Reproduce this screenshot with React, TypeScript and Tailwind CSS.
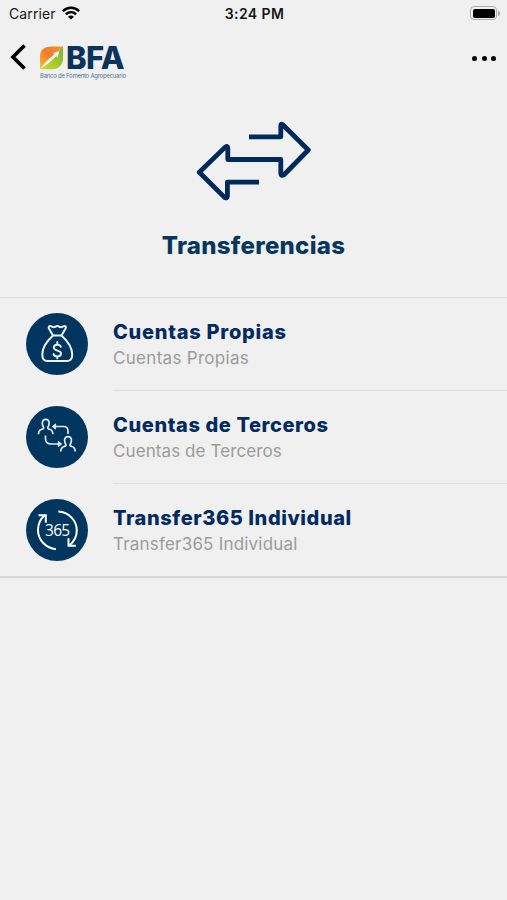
import React from 'react';

const MoneyBagIcon = () => (
  <svg viewBox="0 0 62 62" className="h-[62px] w-[62px]" fill="none" stroke="#eaf3fa" strokeWidth="2" strokeLinecap="round" strokeLinejoin="round">
    <path d="M27 22.500 22.800 15.200c-.6-1.400.5-2.400 1.800-2.100 1.500.4 2.200 1.300 3.500 1 1.200-.3 1.700-1.200 3.200-1.200s2 1 3.200 1.200c1.300.3 2-.6 3.500-1 1.300-.3 2.300.7 1.700 2.100L35.500 22.500Z" />
    <path d="M27 22.500C21 28 16.300 34 16.300 41.500c0 4.500 1.800 6.500 5.200 6.500h19.500c3.400 0 5.200-2 5.200-6.500 0-7.500-4.700-13.500-10.700-19" />
    <path d="M34.800 33.800c-.5-1.400-1.700-2.100-3.500-2.100-2.100 0-3.500 1.100-3.500 2.900 0 4.100 7.200 1.800 7.200 5.900 0 1.800-1.500 2.900-3.700 2.900-2 0-3.300-.8-3.800-2.300M31.300 29v2.500M31.300 43.400v2" strokeWidth="1.900" />
  </svg>
);

const PeopleIcon = () => (
  <svg viewBox="0 0 62 62" className="h-[62px] w-[62px]" fill="none" stroke="#dcebf5" strokeWidth="1.700" strokeLinejoin="round">
    <path d="M12.500 28.200c0-3.300 1.200-4.200 3.300-4.900 1.600-.5 2.100-1.100 1.700-2.300-.9-1-1.200-2.400-1.200-3.700 0-2.600 1.300-3.900 3.400-3.900s3.400 1.300 3.400 3.900c0 1.300-.3 2.700-1.200 3.700-.4 1.200.1 1.800 1.700 2.300 2.100.7 3.300 1.600 3.300 4.900" />
    <path d="M34.800 45.400c0-3.300 1.200-4.200 3.300-4.900 1.600-.5 2.100-1.100 1.700-2.300-.9-1-1.200-2.400-1.200-3.700 0-2.600 1.300-3.900 3.400-3.900s3.400 1.300 3.400 3.900c0 1.300-.3 2.700-1.200 3.700-.4 1.200.1 1.800 1.700 2.300 2.100.7 3.300 1.600 3.300 4.900" />
    <path d="M42 28v-3c0-3-1.500-4.500-4.500-4.500H28" />
    <path d="M19.500 29.500v3c0 3.600 2 5.500 5.500 5.500h9" />
    <path d="m26.200 20.500 3.400-2.600v5.200ZM35.700 38l-3.400-2.600v5.200Z" fill="#dcebf5" strokeWidth="1" />
  </svg>
);

const Transfer365Icon = () => (
  <svg viewBox="0 0 62 62" className="h-[62px] w-[62px]" fill="none" stroke="#ffffff" strokeWidth="2">
    <path d="M30 50.200C20 49.200 12 41 12 31c0-6 2.600-11.300 7-15" />
    <path d="M12.500 16.300h7.300v7.400" />
    <path d="M32.300 12.600C42.500 13 50.800 21.300 50.800 31.500c0 6-3 11.300-7.600 15" />
    <path d="M49.800 46.800h-7.300v-7.500" />
    <text x="31.200" y="36.600" textAnchor="middle" fill="#ffffff" stroke="none" fontFamily="Open Sans, sans-serif" fontSize="15.500" fontWeight="500" letterSpacing="-0.800">365</text>
  </svg>
);

const BackIcon = () => (
  <svg viewBox="0 0 16 26" className="h-[26px] w-4" fill="none" stroke="#000" strokeWidth="3.700">
    <path d="M14.500 1.500 3 13 14.500 24.500" />
  </svg>
);

const WifiIcon = () => (
  <svg viewBox="0 0 18 14" className="h-[14px] w-[18px]" fill="none" stroke="#000" strokeWidth="2.500">
    <path d="M.9 5.100c4.700-4.400 11.500-4.400 16.200 0" />
    <path d="M3.900 8.300c3-2.700 7.200-2.700 10.200 0" />
    <path d="M9 13.600 6 10.700c1.800-1.500 4.200-1.500 6 0Z" fill="#000" stroke="none" />
  </svg>
);

const LeafMark = () => (
  <svg viewBox="0 0 24 24" className="h-6 w-6">
    <defs>
      <linearGradient id="leafWarm" x1="0" y1="1" x2="1" y2="0">
        <stop offset="0" stopColor="#f9c234" />
        <stop offset="0.500" stopColor="#f27a2b" />
        <stop offset="1" stopColor="#f5952f" />
      </linearGradient>
      <linearGradient id="leafGreen" x1="0" y1="1" x2="1" y2="0">
        <stop offset="0" stopColor="#d6da25" />
        <stop offset="1" stopColor="#6fb52f" />
      </linearGradient>
    </defs>
    <path d="M0 23V11C0 4 4 .5 11 .5h12L1 23Z" fill="url(#leafWarm)" />
    <path d="M23 .5V12c0 7-4 11.200-11 11.200H0c5-4 10-9.200 16-15Z" fill="url(#leafGreen)" />
    <path d="M0 23.200C4 17.500 9 12 14.500 8.200l-1.900-1L19.300 5l-1.700 6.900-1.200-1.900C11.500 14.500 6.500 19.500 0 23.200Z" fill="#f5f5ed" />
  </svg>
);

const accounts = [
  { title: 'Cuentas Propias', icon: <MoneyBagIcon />, titleSpacing: 'tracking-[0.740px]', descSpacing: 'tracking-[0.300px]' },
  { title: 'Cuentas de Terceros', icon: <PeopleIcon />, titleSpacing: 'tracking-[0.600px]', descSpacing: 'tracking-[0.090px]' },
  { title: 'Transfer365 Individual', icon: <Transfer365Icon />, titleSpacing: 'tracking-[0.580px]', descSpacing: 'tracking-[0.200px]' },
];

const App = () => {
  return (
    <div className="flex h-[900px] w-full flex-col overflow-hidden bg-[#f0f0f0] font-['Inter',sans-serif]">
      {/* Status bar */}
      <div className="grid h-[26px] grid-cols-3 items-center pl-[9px] pr-[7px] text-[14px] text-[#161616]">
        <div className="flex items-center gap-[6px]">
          <span className="tracking-[0.1px]">Carrier</span>
          <WifiIcon />
        </div>
        <span className="text-center font-semibold tracking-[0.400px]">3:24 PM</span>
        <div className="flex items-center justify-end">
          <div className="h-[14px] w-[27px] rounded-[4px] border border-[#aaa] p-[1.500px]">
            <div className="h-full rounded-[2px] bg-black"></div>
          </div>
          <div className="ml-px h-[5px] w-[2px] rounded-r bg-[#aaa]"></div>
        </div>
      </div>

      {/* Navigation */}
      <header className="flex h-16 items-start justify-between pl-[10px] pr-[11px] pt-[18px]">
        <div className="flex items-start">
          <button aria-label="Atrás"><BackIcon /></button>
          <div className="ml-[14px] mt-[2px]">
            <div className="flex h-6 items-center">
              <LeafMark />
              <span className="ml-[2px] text-[31px] font-extrabold leading-6 tracking-[-0.600px] text-[#0b335b]">BFA</span>
            </div>
            <p className="mt-[2px] h-[7px] whitespace-nowrap text-[6px] leading-[7px] tracking-[-0.260px] text-[#4f7691]">Banco de Fomento Agropecuario</p>
          </div>
        </div>
        <button aria-label="Más" className="mt-3 flex gap-[4.500px]">
          <span className="h-[5px] w-[5px] rounded-full bg-black"></span>
          <span className="h-[5px] w-[5px] rounded-full bg-black"></span>
          <span className="h-[5px] w-[5px] rounded-full bg-black"></span>
        </button>
      </header>

      {/* Section title */}
      <section className="flex h-[207px] flex-col items-center pt-[29px]">
        <svg viewBox="194 119 120 84" className="h-[84px] w-[120px]" fill="none" stroke="#002a5c" strokeWidth="4.800" strokeLinejoin="round">
          <path d="M249 136.800h31.800v-11.300q0-2 2-.8L308.300 150 284 174.800q-3.200 1.500-3.200-1.300v-14h-53v-11.300q0-3-2.600-1.100L199.300 172.300l25.500 25.300q2.600 1.200 2.600-1.600v-13.800H259" />
        </svg>
        <h1 className="mt-[27px] text-[24px] font-extrabold leading-8 tracking-[0.280px] text-[#07375f]">Transferencias</h1>
      </section>

      <ul className="border-b-2 border-t border-b-[#d8d8d8] border-t-[#dedede]">
        {accounts.map((account) => (
          <li key={account.title} className="group flex h-[93px] items-start pl-[26px] last:h-[92px]">
            <div className="mt-[15px] h-[62px] w-[62px] shrink-0 rounded-full bg-[#02365e]">
              {account.icon}
            </div>
            <div className="ml-[25px] h-full grow border-b border-[#dedede] pt-[21px] group-last:border-b-0">
              <h2 className={`text-[20px] font-extrabold leading-[26px] text-[#032b61] ${account.titleSpacing}`}>{account.title}</h2>
              <p className={`text-[17px] font-normal leading-[26px] text-[#9b9b9b] ${account.descSpacing}`}>{account.title}</p>
            </div>
          </li>
        ))}
      </ul>
    </div>
  );
};

export default App;
